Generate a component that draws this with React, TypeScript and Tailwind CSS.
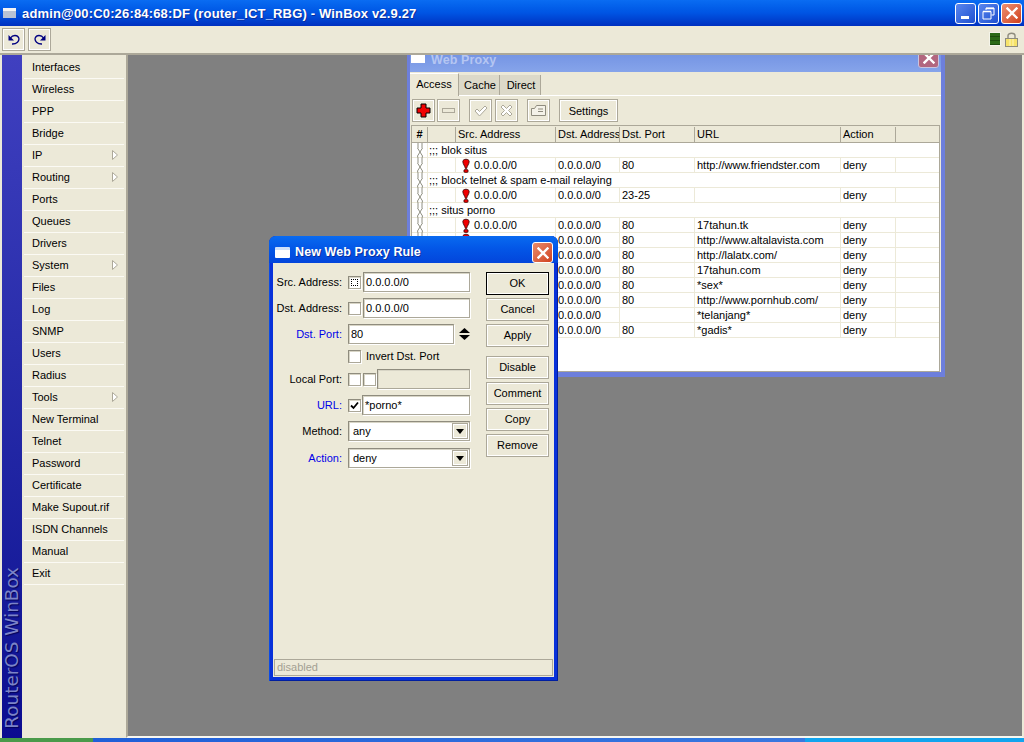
import type { ReactNode } from 'react';

const menu = [
    ['Interfaces'], ['Wireless'], ['PPP'], ['Bridge'], ['IP', 1], ['Routing', 1], ['Ports'], ['Queues'],
    ['Drivers'], ['System', 1], ['Files'], ['Log'], ['SNMP'], ['Users'], ['Radius'], ['Tools', 1],
    ['New Terminal'], ['Telnet'], ['Password'], ['Certificate'], ['Make Supout.rif'], ['ISDN Channels'],
    ['Manual'], ['Exit'],
] as [string, number?][];

type Row = { comment: string } | { port: string; url: string };

const rows: Row[] = [
    { comment: ';;; blok situs' },
    { port: '80', url: 'http://www.friendster.com' },
    { comment: ';;; block telnet & spam e-mail relaying' },
    { port: '23-25', url: '' },
    { comment: ';;; situs porno' },
    { port: '80', url: '17tahun.tk' },
    { port: '80', url: 'http://www.altalavista.com' },
    { port: '80', url: 'http://lalatx.com/' },
    { port: '80', url: '17tahun.com' },
    { port: '80', url: '*sex*' },
    { port: '80', url: 'http://www.pornhub.com/' },
    { port: '', url: '*telanjang*' },
    { port: '80', url: '*gadis*' },
];

const raised = 'border border-[#aca899] bg-[#ece9d8] shadow-[inset_1px_1px_0_#fff,inset_-1px_-1px_0_#fff]';
const sunken = 'border border-[#aca899] border-t-[#8f8c7e] border-l-[#8f8c7e] shadow-[1px_1px_0_#fff,inset_1px_1px_0_#d8d5c6]';

function IconButton({ children, className = '' }: { children: ReactNode; className?: string }) {
    return <div className={`flex h-[23px] w-[23px] shrink-0 items-center justify-center ${raised} ${className}`}>{children}</div>;
}

function Chain() {
    return (
        <svg width="8" height="15" viewBox="0 0 8 15" fill="none" stroke="#8f8f82" strokeWidth="1" className="mx-auto block">
            <path d="M2 0 V5 M6 0 V5 M1.5 5 L6.5 13 M6.5 5 L1.5 13 M1.5 13 L2 15 M6.5 13 L6 15" />
        </svg>
    );
}

function Flag() {
    return (
        <svg width="8" height="15" viewBox="0 0 8 15" className="shrink-0">
            <path d="M0.8 3.5 C0.8 0.5 7.2 0.5 7.2 3.5 C7.2 6 5 8 4.6 10.5 L3.4 10.5 C3 8 0.8 6 0.8 3.5 Z" fill="#f00000" stroke="#300000" strokeWidth="0.8" />
            <rect x="1.8" y="11.5" width="4.4" height="3" rx="1.4" fill="#e00000" stroke="#300000" strokeWidth="0.7" />
        </svg>
    );
}

function Check({ checked, dotted }: { checked?: boolean; dotted?: boolean }) {
    return (
        <div className={`flex h-[13px] w-[13px] shrink-0 items-center justify-center bg-white ${sunken}`}>
            {checked && (
                <svg width="9" height="9" viewBox="0 0 9 9" fill="none" stroke="#000" strokeWidth="1.8">
                    <path d="M1 4.5 L3.5 7 L8 1.5" />
                </svg>
            )}
            {dotted && <div className="h-[7px] w-[7px] border border-dotted border-black" />}
        </div>
    );
}

function Field({ label, blue, children }: { label: string; blue?: boolean; children: ReactNode }) {
    return (
        <div className="flex h-[20px] items-center">
            <div className={`w-[69px] shrink-0 text-right ${blue ? 'text-[#0000e8]' : ''}`}>{label}:</div>
            <div className="ml-[6px] flex flex-1 items-center">{children}</div>
        </div>
    );
}

function Input({ value, className = '' }: { value: string; className?: string }) {
    return <div className={`flex h-[20px] min-w-0 flex-1 items-center bg-white pl-[2px] ${sunken} ${className}`}>{value}</div>;
}

function Select({ value }: { value: string }) {
    return (
        <div className={`flex h-[20px] flex-1 items-center justify-between bg-white pl-[4px] pr-px ${sunken}`}>
            {value}
            <div className={`flex h-[16px] w-[16px] items-center justify-center ${raised}`}>
                <svg width="8" height="5" viewBox="0 0 8 5"><path d="M0 0 H8 L4 5 Z" fill="#000" /></svg>
            </div>
        </div>
    );
}

function FormButton({ label, strong }: { label: string; strong?: boolean }) {
    return (
        <div className={`flex h-[23px] w-[63px] items-center justify-center ${raised} ${strong ? 'border-black' : ''}`}>{label}</div>
    );
}

function CloseGlyph({ size = 12 }: { size?: number }) {
    return (
        <svg width={size} height={size} viewBox="0 0 12 12" stroke="#fff" strokeWidth="2.4" strokeLinecap="square">
            <path d="M1.5 1.5 L10.5 10.5 M10.5 1.5 L1.5 10.5" />
        </svg>
    );
}

function WebProxy() {
    return (
        <div className="absolute left-[279px] top-[-6px] flex h-[328px] w-[538px] flex-col bg-[#6d7fdc] pb-[5px] pl-[3px] pr-[4px]">
            <div className="flex h-[23px] shrink-0 items-end bg-gradient-to-b from-[#7090e2] to-[#86a4ea] pb-[1px] pl-px">
                <div className="mb-[8px] h-[8px] w-[14px] bg-white" />
                <div className="mb-[5px] ml-[6px] font-['Liberation_Sans'] text-[12.5px] font-bold leading-[11px] tracking-[0.1px] text-[#b5c6f2]">Web Proxy</div>
                <div className="mb-[3px] ml-auto mr-[2px] flex h-[20px] w-[21px] items-center justify-center rounded-[3px] border border-[#c9c4de] bg-[#b2667f]">
                    <CloseGlyph />
                </div>
            </div>
            <div className="flex min-h-0 flex-1 flex-col bg-[#ece9d8] pt-px">
                <div className="flex h-[23px] shrink-0 items-end border-b border-white pr-[1px]">
                    <div className="mb-[-1px] flex h-[23px] w-[49px] items-center justify-center border-r border-t border-[#aca899] border-t-white bg-[#ece9d8] pb-[2px]">Access</div>
                    <div className="flex h-[20px] w-[41px] items-center justify-center border-r border-[#aca899] bg-[#dcd9c9] pl-[2px]">Cache</div>
                    <div className="flex h-[20px] w-[41px] items-center justify-center border-r border-[#aca899] bg-[#dcd9c9] pl-[2px]">Direct</div>
                </div>
                <div className="flex h-[28px] shrink-0 items-center pl-[2px] pt-[1px]">
                    <IconButton>
                        <svg width="15" height="15" viewBox="0 0 15 15"><path d="M5 1 H10 V5 H14 V10 H10 V14 H5 V10 H1 V5 H5 Z" fill="#f00000" stroke="#000" strokeWidth="1" /></svg>
                    </IconButton>
                    <IconButton className="ml-[2px]">
                        <svg width="13" height="5" viewBox="0 0 13 5"><rect x="0.5" y="0.5" width="12" height="4" fill="#ece9d8" stroke="#aca899" /></svg>
                    </IconButton>
                    <IconButton className="ml-[9px]">
                        <svg width="14" height="12" viewBox="0 0 14 12" fill="none" stroke="#aca899"><path d="M1 6 L3 4 L5.5 6.5 L11 1 L13 3 L5.5 11 Z" fill="#fff" /></svg>
                    </IconButton>
                    <IconButton className="ml-[3px]">
                        <svg width="13" height="13" viewBox="0 0 13 13" fill="#fff" stroke="#aca899"><path d="M1 3 L3 1 L6.5 4.5 L10 1 L12 3 L8.5 6.5 L12 10 L10 12 L6.5 8.5 L3 12 L1 10 L4.5 6.5 Z" /></svg>
                    </IconButton>
                    <IconButton className="ml-[9px]">
                        <svg width="15" height="11" viewBox="0 0 15 11" fill="#f4f2e8" stroke="#8f8c7e"><path d="M0.5 3.5 H3.5 L5.5 0.5 H14.5 V10.5 H0.5 Z M7 4 H12 M7 6.5 H12" /></svg>
                    </IconButton>
                    <div className={`ml-[9px] flex h-[23px] w-[59px] items-center justify-center pt-[2px] ${raised}`}>Settings</div>
                </div>
                <div className="mx-[1px] mt-[1px] flex min-h-0 flex-1 flex-col border border-[#aca899]">
                    <div className="flex h-[17px] shrink-0 border-b border-[#aca899] bg-[#ece9d8] pt-px">
                        <div className="w-[16px] shrink-0 border-r border-[#aca899] text-center font-bold">#</div>
                        <div className="w-[28px] shrink-0 border-r border-[#aca899]" />
                        <div className="w-[100px] shrink-0 border-r border-[#aca899] pl-[2px]">Src. Address</div>
                        <div className="w-[64px] shrink-0 overflow-hidden whitespace-nowrap border-r border-[#aca899] pl-[2px]">Dst. Address</div>
                        <div className="w-[75px] shrink-0 border-r border-[#aca899] pl-[2px]">Dst. Port</div>
                        <div className="w-[146px] shrink-0 border-r border-[#aca899] pl-[2px]">URL</div>
                        <div className="w-[55px] shrink-0 border-r border-[#aca899] pl-[2px]">Action</div>
                    </div>
                    <div className="min-h-0 flex-1 overflow-hidden bg-white">
                        {rows.map((row, i) => (
                            <div key={i} className="flex h-[15px] border-b border-[#ece9d8] leading-[14px]">
                                <div className="w-[16px] shrink-0 border-r border-[#ece9d8]"><Chain /></div>
                                {'comment' in row ? (
                                    <div className="pl-[1px]">{row.comment}</div>
                                ) : (
                                    <>
                                        <div className="w-[28px] shrink-0 border-r border-[#ece9d8]" />
                                        <div className="flex w-[100px] shrink-0 items-center gap-[4px] border-r border-[#ece9d8] pl-[6px]"><Flag />0.0.0.0/0</div>
                                        <div className="w-[64px] shrink-0 border-r border-[#ece9d8] pl-[2px]">0.0.0.0/0</div>
                                        <div className="w-[75px] shrink-0 border-r border-[#ece9d8] pl-[2px]">{row.port}</div>
                                        <div className="w-[146px] shrink-0 border-r border-[#ece9d8] pl-[2px]">{row.url}</div>
                                        <div className="w-[55px] shrink-0 border-r border-[#ece9d8] pl-[2px]">deny</div>
                                    </>
                                )}
                            </div>
                        ))}
                    </div>
                </div>
            </div>
        </div>
    );
}

function NewRule() {
    return (
        <div className="absolute left-[141px] top-[181px] flex h-[445px] w-[289px] flex-col rounded-t-[7px] bg-[#0831d9] px-[4px] pb-[4px] shadow-[inset_1px_0_0_#0a4ae8,inset_-1px_0_0_#001ea0,inset_0_-1px_0_#001ea0]">
            <div className="mx-[-4px] flex h-[27px] shrink-0 items-end rounded-t-[7px] bg-gradient-to-b from-[#0a6af0] via-[#0355e6] to-[#0345db] pl-[6px] pr-[5px]">
                <div className="mb-[5px] h-[11px] w-[15px] rounded-[1px] border-t-[3px] border-[#cfe0fa] bg-white" />
                <div className="mb-[1px] ml-[5px] font-['Liberation_Sans'] text-[12.5px] font-bold leading-[20px] tracking-[0.1px] text-white [text-shadow:1px_1px_0_#0a2f9c]">New Web Proxy Rule</div>
                <div className="ml-auto flex h-[21px] w-[21px] items-center justify-center rounded-[3px] border border-white bg-gradient-to-br from-[#e98a6a] to-[#d0401c]">
                    <CloseGlyph />
                </div>
            </div>
            <div className="flex min-h-0 flex-1 flex-col bg-[#ece9d8] pt-[9px]">
                <div className="flex min-h-0 flex-1">
                    <div className="flex w-[197px] shrink-0 flex-col gap-[6px]">
                        <Field label="Src. Address"><Check dotted /><Input value="0.0.0.0/0" className="ml-[2px]" /></Field>
                        <Field label="Dst. Address"><Check /><Input value="0.0.0.0/0" className="ml-[2px]" /></Field>
                        <Field label="Dst. Port" blue>
                            <Input value="80" />
                            <div className="flex w-[16px] shrink-0 flex-col items-center gap-[2px] pl-[4px]">
                                <svg width="11" height="5" viewBox="0 0 11 5"><path d="M0 5 L5.5 0 L11 5 Z" fill="#000" /></svg>
                                <svg width="11" height="5" viewBox="0 0 11 5"><path d="M0 0 L5.5 5 L11 0 Z" fill="#000" /></svg>
                            </div>
                        </Field>
                        <div className="flex h-[13px] items-center pl-[75px]">
                            <Check /><span className="ml-[5px]">Invert Dst. Port</span>
                        </div>
                        <Field label="Local Port">
                            <Check /><div className="ml-[2px]"><Check /></div>
                            <div className={`ml-px h-[20px] flex-1 bg-[#ece9d8] ${sunken}`} />
                        </Field>
                        <Field label="URL" blue><Check checked /><Input value="*porno*" className="ml-px" /></Field>
                        <Field label="Method"><Select value="any" /></Field>
                        <div className="mt-px"><Field label="Action" blue><Select value="deny" /></Field></div>
                    </div>
                    <div className="ml-[16px] flex flex-col gap-[3px]">
                        <FormButton label="OK" strong />
                        <FormButton label="Cancel" />
                        <FormButton label="Apply" />
                        <div className="mt-[6px]"><FormButton label="Disable" /></div>
                        <FormButton label="Comment" />
                        <FormButton label="Copy" />
                        <FormButton label="Remove" />
                    </div>
                </div>
                <div className="mx-[1px] mb-[1px] flex h-[17px] shrink-0 items-center border border-[#aca899] pl-[2px] text-[#a3a093]">disabled</div>
            </div>
        </div>
    );
}

export default function App() {
    return (
        <div className="flex h-[742px] w-[1024px] flex-col overflow-hidden bg-[#ece9d8] font-['Liberation_Sans',sans-serif] text-[11px] leading-[15px] text-black">
            <div className="flex h-[26px] shrink-0 items-center bg-gradient-to-b from-[#0a6cf2] via-[#0054e3] to-[#0030c0] pl-[3px] pr-[2px]">
                <div className="h-[10px] w-[13px] border-t-[3px] border-[#f4f4f4] bg-[#b8c2d4]" />
                <div className="ml-[6px] whitespace-nowrap font-['Liberation_Sans'] text-[13px] font-bold tracking-[0.16px] text-white [text-shadow:1px_1px_0_#0a2f9c]">
                    admin@00:C0:26:84:68:DF (router_ICT_RBG) - WinBox v2.9.27
                </div>
                <div className="ml-auto flex gap-[2px]">
                    <div className="flex h-[21px] w-[21px] items-end rounded-[3px] border border-white bg-gradient-to-br from-[#5a86ee] to-[#1f4fd0] pb-[4px] pl-[5px]">
                        <div className="h-[3px] w-[8px] bg-white" />
                    </div>
                    <div className="flex h-[21px] w-[21px] items-center justify-center rounded-[3px] border border-white bg-gradient-to-br from-[#5a86ee] to-[#1f4fd0]">
                        <svg width="13" height="13" viewBox="0 0 13 13" fill="none" stroke="#fff"><path d="M4 3 V1 H12 V8 H9.5 M1 4.5 H9 V12 H1 Z" /><path d="M1 4.5 H9 M4 1.5 H12" strokeWidth="1.5" /></svg>
                    </div>
                    <div className="flex h-[21px] w-[21px] items-center justify-center rounded-[3px] border border-white bg-gradient-to-br from-[#ec8f70] to-[#cf3e18]">
                        <CloseGlyph />
                    </div>
                </div>
            </div>
            <div className="flex h-[29px] shrink-0 items-center border-b-2 border-[#aca899] pb-[1px] pl-[2px] pr-[2px]">
                <IconButton>
                    <svg width="12" height="11" viewBox="0 0 12 11" fill="none" stroke="#000080" strokeWidth="1.3"><path d="M2.5 4 C4.5 0.8 9.5 0.5 10.8 4 C11.6 7 8.8 10.2 4 10" /><path d="M0.5 1 V6.5 H6 Z" fill="#000080" stroke="none" /></svg>
                </IconButton>
                <IconButton className="ml-[3px]">
                    <svg width="12" height="11" viewBox="0 0 12 11" fill="none" stroke="#000080" strokeWidth="1.3"><path d="M9.5 4 C7.5 0.8 2.5 0.5 1.2 4 C0.4 7 3.2 10.2 8 10" /><path d="M11.5 1 V6.5 H6 Z" fill="#000080" stroke="none" /></svg>
                </IconButton>
                <div className="ml-auto h-[14px] w-[12px] shrink-0 border border-[#f4f4ea] bg-[repeating-linear-gradient(180deg,#2c6a17_0,#2c6a17_3px,#1d4d0e_3px,#1d4d0e_4px)]" />
                <svg width="13" height="15" viewBox="0 0 13 15" className="ml-[4px] mr-[4px] shrink-0">
                    <path d="M3 7 V3.5 C3 0.5 10 0.5 10 3.5 V7" fill="none" stroke="#8f8c7e" strokeWidth="1.4" />
                    <rect x="0.5" y="6.5" width="12" height="8" fill="#f6e36a" stroke="#8f8c7e" />
                    <path d="M5 7 V14 M8 7 V14" stroke="#fff6b8" />
                </svg>
            </div>
            <div className="flex min-h-0 flex-1">
                <div className="flex w-[126px] shrink-0 pl-[2px]">
                    <div className="flex w-[20px] shrink-0 items-end bg-gradient-to-b from-[#4040c0] to-[#0c0c90]">
                        <div className="w-[20px] rotate-180 whitespace-nowrap pt-[9px] font-['DejaVu_Sans',sans-serif] text-[18.4px] leading-[20px] text-[#7c84c8] [text-shadow:-1px_1px_1px_#04045a] [writing-mode:vertical-rl]">
                            RouterOS WinBox
                        </div>
                    </div>
                    <div className="flex-1 px-[2px] pt-[2px]">
                        {menu.map(([name, sub]) => (
                            <div key={name} className="flex h-[22px] items-center justify-between border-b border-[#fbfaf4] pl-[8px] pr-[6px]">
                                {name}
                                {sub && (
                                    <svg width="6" height="10" viewBox="0 0 6 10" className="mb-[2px]"><path d="M0.5 0.5 L5.5 5 L0.5 9.5 Z" fill="#fff" stroke="#aca899" /></svg>
                                )}
                            </div>
                        ))}
                    </div>
                </div>
                <div className="relative flex-1 overflow-hidden border-b-2 border-l-2 border-r-2 border-[#aca899] border-b-[#f8f7f0] border-r-[#ece9d8] bg-[#808080]">
                    <WebProxy />
                    <NewRule />
                </div>
            </div>
            <div className="flex h-[4px] shrink-0">
                <div className="w-[93px] bg-[#4a9a4a]" />
                <div className="w-[712px] bg-gradient-to-r from-[#1f5fd8] to-[#3a78e0]" />
                <div className="flex-1 bg-[#12a4ee]" />
            </div>
        </div>
    );
}
